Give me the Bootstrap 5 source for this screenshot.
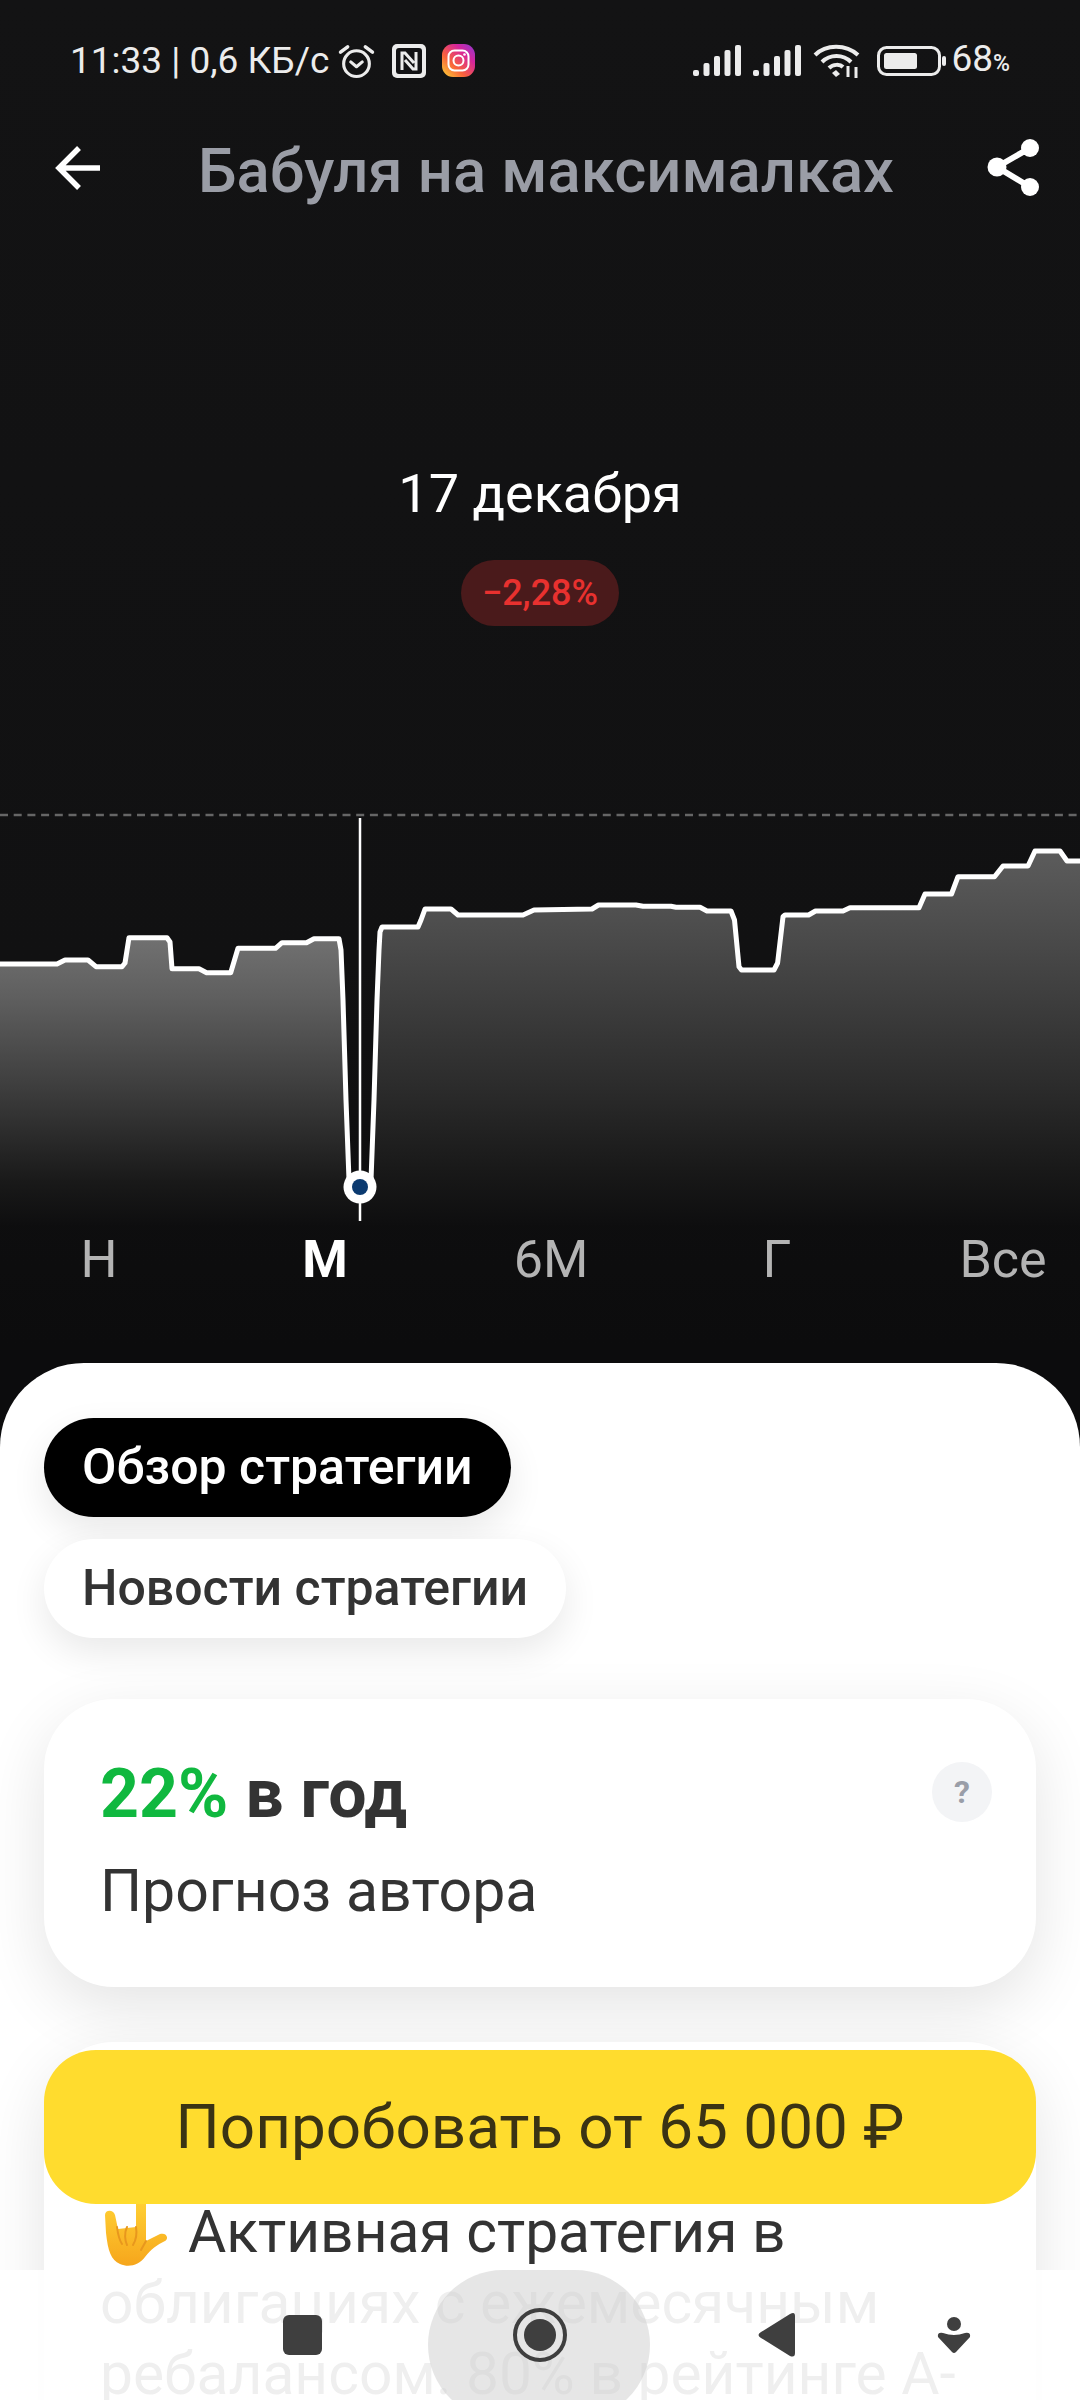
<!DOCTYPE html>
<html lang="ru">

<head>
    <meta charset="UTF-8">
    <meta name="viewport" content="width=device-width, initial-scale=1.0">
    <title>Бабуля на максималках</title>
    <link href="https://cdn.jsdelivr.net/npm/bootstrap@5.3.2/dist/css/bootstrap.min.css" rel="stylesheet">
    <style>
        body {
            margin: 0;
            font-family: Roboto, "Liberation Sans", sans-serif;
            background: #fff;
        }

        .phone {
            width: 1080px;
            height: 2400px;
            overflow: hidden;
            background: linear-gradient(#131314, #111112 40%, #0c0c0d 56%);
        }

        /* status bar */
        .status-bar {
            height: 116px;
            padding: 5px 70px 0 70px;
            color: #ececec;
            font-size: 37px;
            line-height: 111px;
        }

        .status-bar svg {
            display: block;
            flex: none;
        }

        .status-pct {
            font-size: 23px;
            font-weight: 500;
        }

        .sig-gap {
            margin-left: 12px;
        }

        .pct-gap {
            margin-left: 5px;
        }

        /* title row */
        .top-row {
            height: 104px;
            padding: 0 39px 0 55px;
        }

        .top-title {
            font-size: 61.5px;
            font-weight: 500;
            color: #9a9da6;
            line-height: 104px;
            margin: 6px 0 0 6px;
        }

        /* selected point */
        .point-info {
            height: 590px;
            padding-top: 238px;
        }

        .point-date {
            font-size: 54px;
            line-height: 72px;
            color: #fff;
        }

        .point-badge {
            margin-top: 30px;
            height: 66px;
            width: 158px;
            line-height: 66px;
            font-size: 36px;
            font-weight: 500;
            color: #e8312f;
            background: #4a1a1b;
        }

        .chart-box {
            display: block;
            width: 1080px;
            height: 420px;
        }

        .period-row {
            height: 56px;
            padding: 2px 27px 0 49px;
            font-size: 52px;
            line-height: 56px;
            color: #b4b4b4;
        }

        .period-item {
            width: 100px;
            text-align: center;
            white-space: nowrap;
        }

        .period-item.picked {
            color: #fff;
            font-weight: 700;
        }

        /* white sheet */
        .sheet {
            height: 1100px;
            margin-top: 77px;
            padding: 55px 44px 0;
            background: #fff;
            border-radius: 84px 84px 0 0;
        }

        .pill-stack {
            gap: 22px;
        }

        .pill-tab {
            height: 99px;
            padding: 0 38px;
            font-size: 50px;
            font-weight: 500;
            line-height: 99px;
            color: #333;
            background: #fff;
            box-shadow: 0 14px 36px rgba(0, 0, 0, .09);
        }

        .pill-tab.picked {
            color: #fff;
            background: #000;
        }

        .info-card {
            height: 288px;
            margin-top: 61px;
            padding: 53px 44px 0 56px;
            border-radius: 70px;
            box-shadow: 0 20px 64px rgba(0, 0, 0, .11);
        }

        .rate-line {
            font-size: 68px;
            font-weight: 700;
            line-height: 84px;
            color: #333;
        }

        .rate-green {
            color: #10b83f;
        }

        .rate-note {
            margin-top: 20px;
            font-size: 59px;
            line-height: 70px;
            color: #333;
        }

        .help-dot {
            width: 60px;
            height: 60px;
            margin-top: 10px;
            line-height: 60px;
            font-size: 32px;
            font-weight: 700;
            text-align: center;
            color: #9a9ea8;
            background: #f3f4f6;
        }

        .about-card {
            height: 500px;
            margin-top: 55px;
            padding: 155px 20px 0 56px;
            border-radius: 70px;
            font-size: 58.7px;
            line-height: 71px;
            color: #333;
            box-shadow: 0 20px 64px rgba(0, 0, 0, .11);
        }

        .hand-icon {
            display: inline-block;
            width: 62px;
            height: 63px;
            margin-left: 5px;
            margin-right: 21px;
            vertical-align: -14px;
        }

        /* over the content */
        .buy-btn {
            left: 44px;
            top: 2050px;
            width: 992px;
            height: 154px;
            font-size: 62px;
            line-height: 154px;
            padding: 0;
            color: #3a3314;
            background: #ffdc2e;
            border: 0;
            border-radius: 52px;
        }

        .nav-keys {
            left: 0;
            top: 2270px;
            width: 1080px;
            height: 130px;
            background: rgba(255, 255, 255, .92);
        }

        .nav-home {
            left: 428px;
            top: 0;
            width: 222px;
            height: 150px;
            background: rgba(205, 205, 205, .5);
            border-radius: 75px;
        }

        .nav-keys svg {
            left: 0;
            top: 0;
        }
    </style>
</head>

<body>
    <div class="phone position-relative">

        <!-- Status bar -->
        <div class="status-bar d-flex align-items-center">
            <span>11:33 | 0,6 КБ/с</span>
            <svg class="ms-2" width="39" height="36" viewBox="0 0 44 40" fill="none" stroke="#ececec">
                <circle cx="22" cy="23" r="14.5" stroke-width="3.500" />
                <path d="M15.500 21l6.500 5.500 6.500-5.500" stroke-width="3.500" stroke-linecap="round" stroke-linejoin="round" />
                <path d="M4 10l8-6M40 10l-8-6" stroke-width="4" stroke-linecap="round" />
            </svg>
            <svg class="ms-3" width="34" height="34" viewBox="0 0 34 34">
                <rect width="34" height="34" rx="5" fill="#ececec" />
                <rect x="4" y="4" width="26" height="26" rx="3" fill="#121214" />
                <path d="M10 26V9h3l9 10M24 8v17h-3l-8-9" fill="none" stroke="#ececec" stroke-width="3" />
            </svg>
            <svg class="ms-3" width="33" height="33" viewBox="0 0 33 33">
                <defs>
                    <linearGradient id="instaFill" x1="0" y1="1" x2="1" y2="0">
                        <stop offset="0" stop-color="#fdd835" />
                        <stop offset=".35" stop-color="#f9643a" />
                        <stop offset=".7" stop-color="#d6259a" />
                        <stop offset="1" stop-color="#8a3ad8" />
                    </linearGradient>
                </defs>
                <rect width="33" height="33" rx="11" fill="url(#instaFill)" />
                <rect x="6.500" y="6.500" width="20" height="20" rx="6" fill="none" stroke="#fff" stroke-width="2" />
                <circle cx="16.500" cy="16.500" r="5" fill="none" stroke="#fff" stroke-width="2" />
                <circle cx="22.500" cy="10.500" r="1.300" fill="#fff" />
            </svg>

            <svg class="ms-auto" width="48" height="31" viewBox="0 0 48 31" fill="#ececec">
                <rect x="0" y="25" width="6" height="6" rx="2" />
                <rect x="10.500" y="18" width="6" height="13" rx="2" />
                <rect x="21" y="11" width="6" height="20" rx="2" />
                <rect x="31.500" y="5" width="6" height="26" rx="2" />
                <rect x="42" y="0" width="6" height="31" rx="2" />
            </svg>
            <svg class="sig-gap" width="48" height="31" viewBox="0 0 48 31" fill="#ececec">
                <rect x="0" y="25" width="6" height="6" rx="2" />
                <rect x="10.500" y="18" width="6" height="13" rx="2" />
                <rect x="21" y="11" width="6" height="20" rx="2" />
                <rect x="31.500" y="5" width="6" height="26" rx="2" />
                <rect x="42" y="0" width="6" height="31" rx="2" />
            </svg>
            <svg class="sig-gap" width="48" height="34" viewBox="0 0 48 34" fill="none" stroke="#ececec" stroke-width="4">
                <path d="M2 11C13 0 33 0 45 11" />
                <path d="M9 18C17 10 30 10 38 18" />
                <path d="M16 24C20 20 27 20 30 23" />
                <path d="M19 29l4-3 4 4-4 3z" fill="#ececec" stroke="none" />
                <path d="M35 22v11M43 34V23" stroke-width="3" />
            </svg>
            <svg class="ms-3" width="69" height="30" viewBox="0 0 69 30">
                <rect x="1.500" y="1.500" width="61" height="27" rx="8" fill="none" stroke="#ececec" stroke-width="3" />
                <rect x="7" y="7" width="33" height="16" rx="2.500" fill="#ececec" />
                <rect x="65" y="10" width="4" height="10" rx="2" fill="#ececec" />
            </svg>
            <span class="pct-gap">68<span class="status-pct">%</span></span>
        </div>

        <!-- Title row -->
        <div class="top-row d-flex align-items-center justify-content-between">
            <svg width="46" height="46" viewBox="0 0 46 46" fill="none" stroke="#fff" stroke-width="5.500">
                <path d="M45 23H4M24 3L4 23l20 20" />
            </svg>
            <h1 class="top-title">Бабуля на максималках</h1>
            <svg width="56" height="60" viewBox="0 0 56 60" fill="#fff">
                <path d="M45 10L12 29l33 20" fill="none" stroke="#fff" stroke-width="6" />
                <circle cx="45" cy="10" r="9" />
                <circle cx="12" cy="29" r="9.500" />
                <circle cx="45" cy="49" r="9" />
            </svg>
        </div>

        <!-- Selected point -->
        <div class="point-info d-flex flex-column align-items-center">
            <div class="point-date">17 декабря</div>
            <div class="point-badge rounded-pill text-center">−2,28%</div>
        </div>

        <!-- Chart -->
        <svg class="chart-box" viewBox="0 810 1080 420">
            <defs>
                <linearGradient id="areaLeft" gradientUnits="userSpaceOnUse" x1="0" y1="940" x2="0" y2="1225">
                    <stop offset="0" stop-color="#707070" />
                    <stop offset=".2" stop-color="#5f5f5f" />
                    <stop offset=".55" stop-color="#3a3a3a" />
                    <stop offset=".85" stop-color="#191919" />
                    <stop offset="1" stop-color="#0e0e0f" />
                </linearGradient>
                <linearGradient id="areaRight" gradientUnits="userSpaceOnUse" x1="0" y1="850" x2="0" y2="1225">
                    <stop offset="0" stop-color="#5c5c5c" />
                    <stop offset=".2" stop-color="#4d4d4d" />
                    <stop offset=".42" stop-color="#3c3c3c" />
                    <stop offset=".65" stop-color="#2a2a2a" />
                    <stop offset=".85" stop-color="#191919" />
                    <stop offset="1" stop-color="#0e0e0f" />
                </linearGradient>
            </defs>
            <path fill="url(#areaLeft)" d="M0 964H57L65 960H88L96 966.700H122L125 963 129 937.700H167L170 942 172 968.700H199L206.600 972.700H230.700L238 948.300H275.500L282 942.700H306.500L314 938.700H339L341 950 343 1000 346 1100 349 1180 360 1187V1225H0Z" />
            <path fill="url(#areaRight)" d="M360 1187L371 1180 374 1100 377 1000 379 950 380 932 382 927H418L421 920 425 909H451L458 915H523L534 910 592 909 598.500 905H636L643 906.300H671L676 907.300H700L707 911H731L734.500 920 739 966.700 741.500 970H774L777.600 963 783 916.700 785 915H808.600L815.500 911H843L850 907.700H919L925 894H951.500L958 876.700H994.500L1003 866H1028L1035 851H1060L1067 861H1080V1225H360Z" />
            <path d="M0 815H1080" stroke="#666" stroke-width="2.500" stroke-dasharray="8 5.700" />
            <path d="M360 818V1221" stroke="#fff" stroke-width="2.500" />
            <path fill="none" stroke="#fff" stroke-width="5" stroke-linejoin="round" d="M0 964H57L65 960H88L96 966.700H122L125 963 129 937.700H167L170 942 172 968.700H199L206.600 972.700H230.700L238 948.300H275.500L282 942.700H306.500L314 938.700H339L341 950 343 1000 346 1100 349 1180 360 1187 371 1180 374 1100 377 1000 379 950 380 932 382 927H418L421 920 425 909H451L458 915H523L534 910 592 909 598.500 905H636L643 906.300H671L676 907.300H700L707 911H731L734.500 920 739 966.700 741.500 970H774L777.600 963 783 916.700 785 915H808.600L815.500 911H843L850 907.700H919L925 894H951.500L958 876.700H994.500L1003 866H1028L1035 851H1060L1067 861H1080" />
            <circle cx="360" cy="1187" r="16.500" fill="#fff" />
            <circle cx="360" cy="1187" r="8" fill="#0b3a70" />
        </svg>

        <!-- Periods -->
        <div class="period-row d-flex justify-content-between">
            <span class="period-item">Н</span>
            <span class="period-item picked">М</span>
            <span class="period-item">6М</span>
            <span class="period-item">Г</span>
            <span class="period-item">Все</span>
        </div>

        <!-- White sheet -->
        <div class="sheet">
            <div class="pill-stack d-flex flex-column align-items-start">
                <div class="pill-tab picked rounded-pill">Обзор стратегии</div>
                <div class="pill-tab rounded-pill">Новости стратегии</div>
            </div>

            <div class="info-card card border-0 d-flex flex-row justify-content-between">
                <div>
                    <div class="rate-line"><span class="rate-green">22%</span> в год</div>
                    <div class="rate-note">Прогноз автора</div>
                </div>
                <div class="help-dot rounded-circle">?</div>
            </div>

            <div class="about-card card border-0 d-block">
                <svg class="hand-icon" viewBox="0 0 62 63">
                    <defs>
                        <linearGradient id="handFill" x1="0" y1="0" x2="0" y2="1">
                            <stop offset="0" stop-color="#ffcf33" />
                            <stop offset="1" stop-color="#f6a61c" />
                        </linearGradient>
                    </defs>
                    <path fill="url(#handFill)" d="M0 12C0 7 8 6 10 12L13 26 31 24V0H41V38L55 31C62 29 64 36 60 38 52 42 46 46 40 54 34 62 24 65 15 61 6 57 3 48 1 30Z" />
                    <path d="M12 24c1 8 3 14 5 17M22 24c-3 6-2 14 0 18M31 24c1 6 0 13-3 18M41 38l-5 9" fill="none" stroke="#e8971d" stroke-width="2" stroke-linecap="round" />
                </svg>Активная стратегия в<br>облигациях с ежемесячным<br>ребалансом. 80% в рейтинге А-
            </div>
        </div>

        <!-- Buy button, stays over the content -->
        <button type="button" class="buy-btn btn position-absolute">Попробовать от 65 000 ₽</button>

        <!-- System keys -->
        <div class="nav-keys position-absolute">
            <div class="nav-home position-absolute"></div>
            <svg class="position-absolute" width="1080" height="130" viewBox="0 2270 1080 130" fill="#3f3f3f">
                <rect x="283" y="2315" width="39" height="40" rx="6" />
                <circle cx="540" cy="2335" r="25" fill="none" stroke="#3f3f3f" stroke-width="4" />
                <circle cx="540" cy="2335" r="16" />
                <path d="M795 2316V2353Q795 2358 790 2356L761 2338Q756 2335 761 2332L790 2314Q795 2311 795 2316Z" />
                <circle cx="954" cy="2324" r="7" />
                <path d="M938 2337Q937 2332 943 2333Q954 2337 965 2333Q971 2332 970 2337L956 2352Q954 2354 952 2352Z" />
            </svg>
        </div>
    </div>

    <script src="https://cdn.jsdelivr.net/npm/bootstrap@5.3.2/dist/js/bootstrap.bundle.min.js"></script>
</body>

</html>
